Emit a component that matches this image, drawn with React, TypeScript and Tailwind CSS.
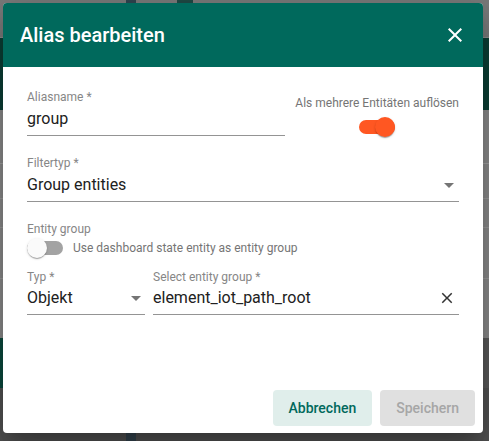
import React from "react";

function Toggle({ on }: { on: boolean }) {
  return (
    <div className="relative w-[36px] h-[20px] flex items-center shrink-0">
      <div
        className={
          on
            ? "w-[36px] h-[14px] rounded-full bg-[#ff5722]"
            : "w-[36px] h-[14px] rounded-full bg-[#a3a3a3]"
        }
      />
      <div
        className={
          on
            ? "absolute top-0 left-[16px] w-[20px] h-[20px] rounded-full bg-[#ff5722] shadow-[0_2px_1px_-1px_rgba(0,0,0,0.2),0_1px_1px_0_rgba(0,0,0,0.14),0_1px_3px_0_rgba(0,0,0,0.12)]"
            : "absolute top-0 left-0 w-[20px] h-[20px] rounded-full bg-[#fafafa] shadow-[0_2px_1px_-1px_rgba(0,0,0,0.2),0_1px_1px_0_rgba(0,0,0,0.14),0_1px_3px_0_rgba(0,0,0,0.12)]"
        }
      />
    </div>
  );
}

function Arrow() {
  return (
    <div className="w-0 h-0 border-l-[5px] border-r-[5px] border-t-[5px] border-l-transparent border-r-transparent border-t-[#757575] shrink-0" />
  );
}

function CloseIcon({ size, color }: { size: number; color: string }) {
  return (
    <svg width={size} height={size} viewBox="0 0 24 24" className="shrink-0">
      <path
        fill={color}
        d="M19 6.41L17.59 5 12 10.59 6.41 5 5 6.41 10.59 12 5 17.59 6.41 19 12 13.41 17.59 19 19 17.59 13.41 12z"
      />
    </svg>
  );
}

function Field({
  label,
  value,
  trailing,
  className,
  gap,
}: {
  label: string;
  value: string;
  trailing?: React.ReactNode;
  className?: string;
  gap?: string;
}) {
  return (
    <div className={className}>
      <div className="h-[14px] text-[12px] leading-[14px] text-[#868686] whitespace-nowrap">
        {label}
      </div>
      <div
        className={
          (gap ?? "mt-[3px]") +
          " h-[24px] flex items-center text-[16px] leading-[24px] text-[#212121]"
        }
      >
        <span className="flex-1 whitespace-nowrap">{value}</span>
        {trailing}
      </div>
      <div className="mt-[4px] h-px bg-[#949494]" />
    </div>
  );
}

export default function App() {
  return (
    <div className="relative w-[489px] h-[441px] overflow-hidden font-['Roboto',sans-serif] bg-[#7a7a7a]">
      {/* dimmed page behind the dialog */}
      <div className="flex flex-col h-full">
        <div className="h-[37px] bg-[#7a7a7a] flex">
          <div className="w-[126px]" />
          <div className="w-[10px] h-[3px] bg-[#2f4550]" />
          <div className="w-[41px]" />
          <div className="w-[16px] h-[3px] bg-[#1f4a44]" />
        </div>
        <div className="h-px bg-[#8c8c8c]" />
        <div className="h-[72px] bg-[#0b3f35]" />
        <div className="h-[228px] bg-[#8a8a8a] flex flex-col">
          <div className="h-[53px]" />
          <div className="h-px bg-[#a0a0a0]" />
          <div className="h-[34px]" />
          <div className="h-px bg-[#9a9a9a]" />
          <div className="h-[28px]" />
          <div className="h-px bg-[#9a9a9a]" />
          <div className="h-[50px]" />
          <div className="h-px bg-[#9a9a9a]" />
          <div className="flex-1" />
        </div>
        <div className="h-[50px] flex">
          <div className="w-[10px] bg-[#0b4a3e]" />
          <div className="flex-1 bg-[#595959]" />
        </div>
        <div className="flex-1 bg-[#525252] flex">
          <div className="w-[126px]" />
          <div className="w-[10px] bg-[#34444e]" />
        </div>
      </div>

      {/* dialog */}
      <div className="absolute left-[3px] top-[3px] w-[480px] h-[430px] bg-white rounded-[4px] overflow-hidden flex flex-col shadow-[0_11px_15px_-7px_rgba(0,0,0,0.2),0_24px_38px_3px_rgba(0,0,0,0.14),0_9px_46px_8px_rgba(0,0,0,0.12)]">
        <div className="h-[64px] bg-[#00695c] flex items-center justify-between pl-[17px] pr-[16px] shrink-0">
          <div className="text-[20px] leading-[24px] font-medium text-white whitespace-nowrap">
            Alias bearbeiten
          </div>
          <CloseIcon size={24} color="#ffffff" />
        </div>

        <div className="flex-1 flex flex-col px-[24px] pt-[23px]">
          <div className="flex">
            <Field className="w-[258px]" label="Aliasname *" value="group" />
            <div className="ml-auto flex flex-col items-center pt-[6px]">
              <div className="text-[12px] leading-[14px] text-[#757575] whitespace-nowrap">
                Als mehrere Entitäten auflösen
              </div>
              <div className="mt-[7px]">
                <Toggle on={true} />
              </div>
            </div>
          </div>

          <Field
            className="mt-[19px]"
            label="Filtertyp *"
            value="Group entities"
            trailing={
              <div className="mr-[5px]">
                <Arrow />
              </div>
            }
          />

          <div className="mt-[20px] h-[14px] text-[12px] leading-[14px] text-[#868686]">
            Entity group
          </div>
          <div className="mt-[2px] flex items-center gap-[10px]">
            <Toggle on={false} />
            <div className="text-[12px] leading-[14px] text-[#757575] whitespace-nowrap">
              Use dashboard state entity as entity group
            </div>
          </div>

          <div className="mt-[12px] flex gap-[8px]">
            <Field
              className="w-[118px]"
              gap="mt-[2px]"
              label="Typ *"
              value="Objekt"
              trailing={
                <div className="mr-[4px]">
                  <Arrow />
                </div>
              }
            />
            <Field
              className="flex-1"
              gap="mt-[2px]"
              label="Select entity group *"
              value="element_iot_path_root"
              trailing={
                <div className="mr-[3px]">
                  <CloseIcon size={18} color="#333333" />
                </div>
              }
            />
          </div>
        </div>

        <div className="flex justify-end gap-[8px] pr-[8px] pb-[7px] shrink-0">
          <button className="h-[36px] px-[16px] rounded-[4px] bg-[#e0eeeb] text-[#00695c] text-[14px] font-medium">
            Abbrechen
          </button>
          <button className="h-[36px] px-[16px] rounded-[4px] bg-[#e0e0e0] text-[#a6a6a6] text-[14px] font-medium">
            Speichern
          </button>
        </div>
      </div>
    </div>
  );
}
